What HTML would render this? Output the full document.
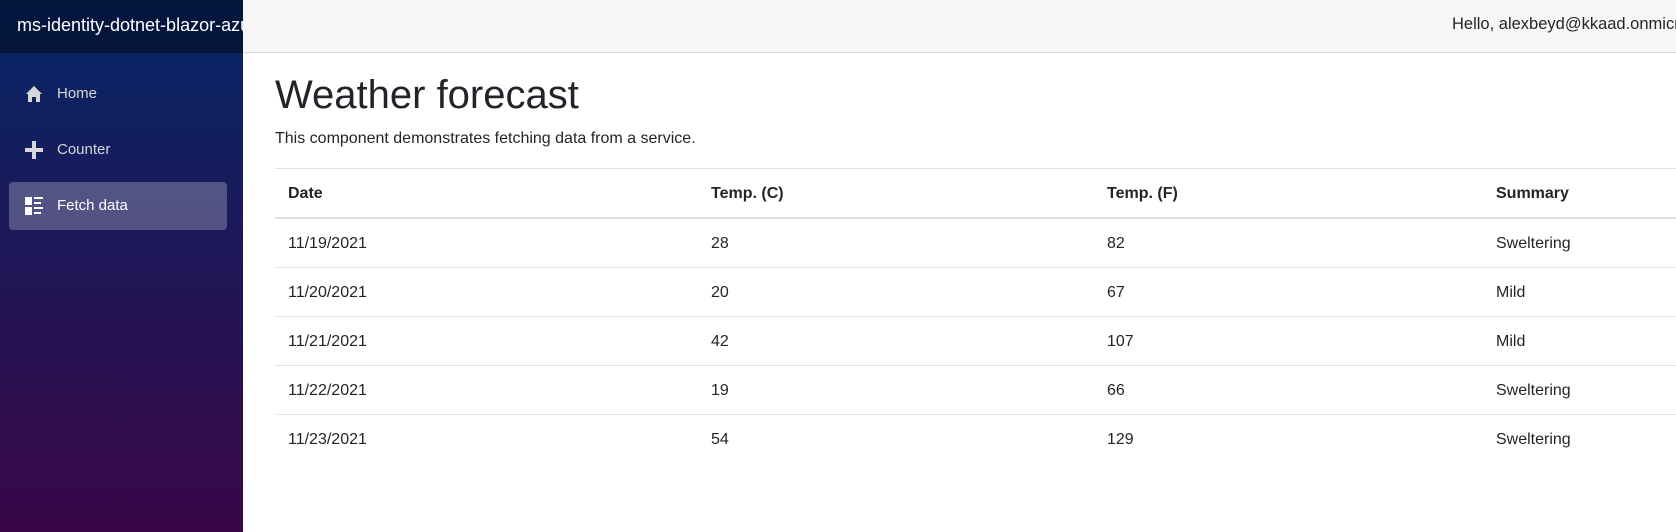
<!DOCTYPE html>
<html><head><style>
*{box-sizing:border-box;margin:0;padding:0}
html,body{width:1676px;height:532px;overflow:hidden}
body{font-family:"Liberation Sans",sans-serif;color:#212529;background:#fff;position:relative}
.side{position:absolute;left:0;top:0;width:243px;height:532px;background:linear-gradient(180deg,#052767 0%,#3a0647 100%)}
.brand{height:53px;background:rgba(0,0,0,0.4);color:#fff;font-size:18px;padding-left:17px;line-height:50px;white-space:nowrap;overflow:hidden}
.nav{position:absolute;left:9px;width:218px;height:48px;border-radius:4px;color:#d7d7d7;font-size:15px;line-height:48px;padding-left:48px}
.nav.act{background:rgba(255,255,255,0.25);color:#fff}
.nav svg{position:absolute;left:16px;top:15px}
.top{position:absolute;left:243px;top:0;width:1433px;height:53px;background:#f7f7f7;border-bottom:1px solid #d6d5d5;overflow:hidden}
.hello{position:absolute;left:1209px;top:15px;font-size:16.5px;white-space:nowrap}
h1{position:absolute;left:275px;top:73px;font-size:40px;font-weight:400}
.sub{position:absolute;left:275px;top:130px;font-size:16px}
.tbl{position:absolute;left:275px;width:1401px;top:168px;border-top:1px solid #dee2e6;overflow:hidden}
.row{height:49px;border-bottom:1px solid #dee2e6;position:relative;font-size:16px;line-height:49px}
.row.h{font-weight:700;border-bottom:2px solid #dee2e6;height:50px}
.row span{position:absolute;top:0}
.c1{left:13px}.c2{left:436px}.c3{left:832px}.c4{left:1221px}
</style></head><body>
<div class="side">
<div class="brand">ms-identity-dotnet-blazor-azure-ad</div>
<div class="nav" style="top:70px"><svg width="18" height="18" viewBox="0 0 18 18"><path d="M9 1 L1 9 H3 V17 H7 V12 H11 V17 H15 V9 H17 Z" fill="#d7d7d7"/></svg>Home</div>
<div class="nav" style="top:126px"><svg width="18" height="18" viewBox="0 0 18 18"><path d="M7 0H11V7H18V11H11V18H7V11H0V7H7Z" fill="#d7d7d7"/></svg>Counter</div>
<div class="nav act" style="top:182px"><svg width="18" height="18" viewBox="0 0 18 18" fill="#fff"><rect x="0" y="0" width="7" height="8"/><rect x="0" y="10" width="7" height="8"/><rect x="9" y="0" width="9" height="2"/><rect x="9" y="5" width="7" height="2"/><rect x="9" y="10" width="9" height="2"/><rect x="9" y="15" width="7" height="2"/></svg>Fetch data</div>
</div>
<div class="top"><div class="hello">Hello, alexbeyd@kkaad.onmicrosoft.com!</div></div>
<h1>Weather forecast</h1>
<div class="sub">This component demonstrates fetching data from a service.</div>
<div class="tbl">
<div class="row h"><span class="c1">Date</span><span class="c2">Temp. (C)</span><span class="c3">Temp. (F)</span><span class="c4">Summary</span></div>
<div class="row"><span class="c1">11/19/2021</span><span class="c2">28</span><span class="c3">82</span><span class="c4">Sweltering</span></div>
<div class="row"><span class="c1">11/20/2021</span><span class="c2">20</span><span class="c3">67</span><span class="c4">Mild</span></div>
<div class="row"><span class="c1">11/21/2021</span><span class="c2">42</span><span class="c3">107</span><span class="c4">Mild</span></div>
<div class="row"><span class="c1">11/22/2021</span><span class="c2">19</span><span class="c3">66</span><span class="c4">Sweltering</span></div>
<div class="row" style="border-bottom:none"><span class="c1">11/23/2021</span><span class="c2">54</span><span class="c3">129</span><span class="c4">Sweltering</span></div>
</div>
</body></html>
